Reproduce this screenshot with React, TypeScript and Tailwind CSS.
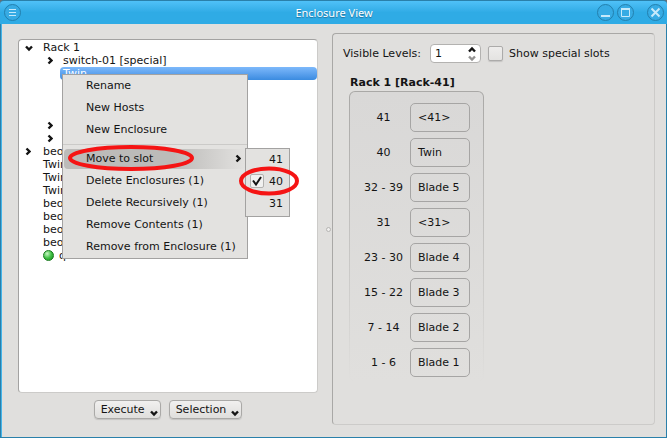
import React from "react";

type ChevronProps = { direction: "right" | "down" | "up"; className?: string };

function Chevron({ direction, className = "" }: ChevronProps) {
  const paths = {
    right: "M1.5 1.5 L4.5 4.5 L1.5 7.5",
    down: "M1 2.5 L4 5.5 L7 2.5",
    up: "M1 5.5 L4 2.5 L7 5.5",
  };
  return (
    <svg
      aria-hidden="true"
      viewBox={direction === "right" ? "0 0 6 9" : "0 0 8 8"}
      strokeWidth="2.4"
      className={`block shrink-0 fill-none ${direction === "right" ? "h-[9px] w-[6px]" : "size-2"} ${className}`}
    >
      <path d={paths[direction]} />
    </svg>
  );
}

type TreeRow = {
  label: string;
  level: 0 | 1;
  arrow?: "right" | "down";
  selected?: boolean;
  online?: boolean;
};

const treeRows: TreeRow[] = [
  { label: "Rack 1", level: 0, arrow: "down" },
  { label: "switch-01 [special]", level: 1, arrow: "right" },
  { label: "Twin", level: 1, selected: true },
  { label: "", level: 1 },
  { label: "", level: 1 },
  { label: "", level: 1 },
  { label: "", level: 1, arrow: "right" },
  { label: "", level: 1, arrow: "right" },
  { label: "beo", level: 0, arrow: "right" },
  { label: "Twin", level: 0 },
  { label: "Twin", level: 0 },
  { label: "Twin", level: 0 },
  { label: "beo", level: 0 },
  { label: "beo", level: 0 },
  { label: "beo", level: 0 },
  { label: "beo", level: 0 },
  { label: "q", level: 0, online: true },
];

const slots = [
  { range: "41", name: "<41>" },
  { range: "40", name: "Twin" },
  { range: "32 - 39", name: "Blade 5" },
  { range: "31", name: "<31>" },
  { range: "23 - 30", name: "Blade 4" },
  { range: "15 - 22", name: "Blade 3" },
  { range: "7 - 14", name: "Blade 2" },
  { range: "1 - 6", name: "Blade 1" },
];

function TitleButton({ label, children }: { label: string; children: React.ReactNode }) {
  return (
    <button
      type="button"
      aria-label={label}
      className="flex size-[17px] items-center justify-center rounded-full border border-[#2380ae] bg-[#36abe4]"
    >
      <svg viewBox="0 0 15 15" className="size-[15px] shrink-0 fill-none stroke-[#c5e9fb]">
        {children}
      </svg>
    </button>
  );
}

function TitleBar() {
  return (
    <header className="flex h-6 items-center justify-between rounded-t border-t border-[#2a80aa] bg-linear-to-b from-[#4fc1f8] to-[#2fabe5] to-50% pr-[3px] pl-1">
      <div className="flex flex-1">
        <TitleButton label="Window menu">
          <path d="M4 4.5h7M4 7.5h7M4 10.5h7" />
        </TitleButton>
      </div>
      <h1 className="font-['Noto_Sans',sans-serif] text-[11px] text-white [text-shadow:0_1px_1px_#1f6f98]">
        Enclosure View
      </h1>
      <div className="flex flex-1 justify-end gap-[3px]">
        <TitleButton label="Minimize">
          <path d="M3 11h9" strokeWidth="2" />
        </TitleButton>
        <TitleButton label="Maximize">
          <path d="M3.5 4v7.5h8V4" />
          <path d="M3 4h9" strokeWidth="2" />
        </TitleButton>
        <div className="ml-[10px]">
          <TitleButton label="Close">
            <path d="M3.5 3.5l8 8M11.5 3.5l-8 8" strokeWidth="2" />
          </TitleButton>
        </div>
      </div>
    </header>
  );
}

function Tree() {
  return (
    <ul role="tree" aria-label="Enclosures" className="pt-px">
      {treeRows.map((row, i) => (
        <li
          key={i}
          role="treeitem"
          aria-selected={row.selected ?? false}
          className={`flex h-[13px] items-center ${row.level === 1 ? "pl-[28px]" : "pl-[6px]"}`}
        >
          {!row.selected && (
            <span className={`flex shrink-0 ${row.level === 1 ? "w-4" : "w-[18px]"}`}>
              {row.arrow && <Chevron direction={row.arrow} className="stroke-[#141414]" />}
            </span>
          )}
          {row.online && (
            <span className="mr-[5px] size-[11px] shrink-0 rounded-full border border-[#16791b] bg-radial-[at_35%_30%] from-[#c8f7c4] via-[#3fc044] to-[#148a1b]" />
          )}
          {row.selected ? (
            <span className="ml-[13px] flex h-[13px] flex-1 items-center rounded-sm bg-linear-to-b from-[#7db9fb] to-[#3a8be0] pl-[3px] text-white">
              {row.label}
            </span>
          ) : (
            <span>{row.label}</span>
          )}
        </li>
      ))}
    </ul>
  );
}

const menuItem = "flex h-[22px] w-full items-center pl-[23px] text-left whitespace-nowrap";

function ContextMenu() {
  return (
    <div
      role="menu"
      className="absolute top-[34px] left-[43px] w-[186px] border border-[#a3a2a1] bg-[#e3e2e0] pb-px"
    >
      <div className="-mt-px">
        <button type="button" role="menuitem" className={menuItem}>Rename</button>
        <button type="button" role="menuitem" className={menuItem}>New Hosts</button>
        <button type="button" role="menuitem" className={menuItem}>New Enclosure</button>
      </div>
      <hr className="my-1 border-[#cbcac8]" />
      <button
        type="button"
        role="menuitem"
        className="ml-px flex h-5 w-[182px] items-center justify-between rounded-sm bg-linear-to-r from-[#bcbbb9] from-60% to-[#e3e2e0] pr-[5px] pb-px pl-[22px]"
      >
        Move to slot
        <Chevron direction="right" className="stroke-[#141414]" />
      </button>
      <button type="button" role="menuitem" className={menuItem}>Delete Enclosures (1)</button>
      <button type="button" role="menuitem" className={menuItem}>Delete Recursively (1)</button>
      <button type="button" role="menuitem" className={menuItem}>Remove Contents (1)</button>
      <button type="button" role="menuitem" className={menuItem}>Remove from Enclosure (1)</button>
    </div>
  );
}

function SlotMenu() {
  return (
    <div
      role="menu"
      className="absolute top-[108px] left-[226px] w-[45px] border border-[#a3a2a1] bg-[#e3e2e0] pb-[2px]"
    >
      <div className="-mt-px">
        <button type="button" role="menuitem" className="flex h-[22px] w-full items-center justify-end pr-[6px]">
          41
        </button>
        <label className="flex h-[22px] items-center justify-between pr-[6px] pl-1">
          <span className="relative flex size-[14px]">
            <input
              type="checkbox"
              defaultChecked
              className="size-[14px] appearance-none rounded-xs border border-[#b3b2b0] bg-[#f1f1f0]"
            />
            <svg viewBox="0 0 14 14" className="pointer-events-none absolute inset-0 fill-none stroke-[#141414] stroke-2">
              <path d="M3 6.5L6 10.5L11 3" />
            </svg>
          </span>
          40
        </label>
        <button type="button" role="menuitem" className="flex h-[22px] w-full items-center justify-end pr-[6px]">
          31
        </button>
      </div>
    </div>
  );
}

function Highlights() {
  return (
    <>
      <svg viewBox="0 0 128 28" className="pointer-events-none absolute top-[104px] left-[48px] h-7 w-32 fill-none stroke-[#f51414] stroke-4">
        <ellipse cx="64" cy="14" rx="61" ry="11" />
      </svg>
      <svg viewBox="0 0 62 30" className="pointer-events-none absolute top-[126px] left-[219px] h-[30px] w-[62px] fill-none stroke-[#f51414] stroke-4">
        <ellipse cx="31" cy="15" rx="28" ry="12.5" />
      </svg>
    </>
  );
}

function DropButton({ label }: { label: string }) {
  return (
    <button
      type="button"
      className="flex h-[19px] items-center gap-[5px] rounded border border-[#aaa9a7] bg-linear-to-b from-[#f1f0ef] to-[#dfdedc] pr-[2px] pl-[6px] shadow-[0_1px_1px_#c4c3c1]"
    >
      {label}
      <Chevron direction="down" className="mt-[6px] stroke-[#141414]" />
    </button>
  );
}

function RackPanel() {
  return (
    <section className="min-w-0 rounded border border-t-[#a9a8a6] border-r-[#cccbc9] border-b-[#cccbc9] border-l-[#a9a8a6] pt-[10px] pl-[10px]">
      <div className="flex h-[19px] items-center">
        <label htmlFor="levels" className="w-[87px] whitespace-nowrap">Visible Levels:</label>
        <div className="flex h-[19px] w-[51px] items-center rounded border border-[#b3b2b0] bg-white pr-1">
          <input
            id="levels"
            type="number"
            defaultValue={1}
            className="w-full min-w-0 [appearance:textfield] bg-transparent pl-1 outline-none [&::-webkit-inner-spin-button]:appearance-none"
          />
          <span className="flex flex-col">
            <Chevron direction="up" className="stroke-[#141414]" />
            <Chevron direction="down" className="stroke-[#939291]" />
          </span>
        </div>
        <label className="ml-[7px] flex items-center gap-[6px] whitespace-nowrap">
          <input
            type="checkbox"
            className="size-[15px] appearance-none rounded-xs border border-[#acabaa] bg-linear-to-b from-[#eeedec] to-[#e4e3e1] shadow-[0_1px_1px_#c4c3c1]"
          />
          Show special slots
        </label>
      </div>
      <h2 className="mt-3 ml-[7px] h-4 leading-4 font-bold">Rack 1 [Rack-41]</h2>
      <div className="ml-[6px] w-[135px] rounded-md bg-linear-to-b from-[#a9a8a6] to-[#e0dfdd] p-px">
        <ul className="flex flex-col gap-[6px] rounded-[5px] bg-linear-to-b from-[#d9d8d7] to-[#e0dfdd] pt-[11px] pr-[13px] pb-1 pl-[7px]">
          {slots.map((slot) => (
            <li key={slot.range} className="flex h-[29px] items-center justify-between">
              <span className="w-[53px] text-center whitespace-nowrap">{slot.range}</span>
              <button
                type="button"
                className="h-[29px] w-[60px] rounded-[5px] border border-[#a6a5a4] pl-[7px] text-left whitespace-nowrap"
              >
                {slot.name}
              </button>
            </li>
          ))}
        </ul>
      </div>
    </section>
  );
}

export default function App() {
  return (
    <div className="flex min-h-screen flex-col bg-[#6d6d70] font-['DejaVu_Sans',sans-serif] text-[11px] leading-[13px] text-[#141414]">
      <TitleBar />
      <main className="grid flex-1 grid-cols-[300fr_14px_323fr] border-x border-b border-[#2a80aa] bg-[#e0dfdd] pt-[9px] pr-[11px] pb-3 pl-[17px] shadow-[inset_1px_0_#45b5ea]">
        <section className="flex min-w-0 flex-col pt-[6px]">
          <div className="relative flex-1 rounded border border-t-[#a3a2a1] border-r-[#cccbc9] border-b-[#cccbc9] border-l-[#a3a2a1] bg-white">
            <Tree />
            <ContextMenu />
            <SlotMenu />
            <Highlights />
          </div>
          <div className="mt-[7px] mb-[6px] flex justify-center gap-2">
            <DropButton label="Execute" />
            <DropButton label="Selection" />
          </div>
        </section>
        <div className="flex items-center justify-end pr-px">
          <span className="size-[5px] rounded-full border border-[#b5b4b2] bg-[#f0efee]" />
        </div>
        <RackPanel />
      </main>
    </div>
  );
}
